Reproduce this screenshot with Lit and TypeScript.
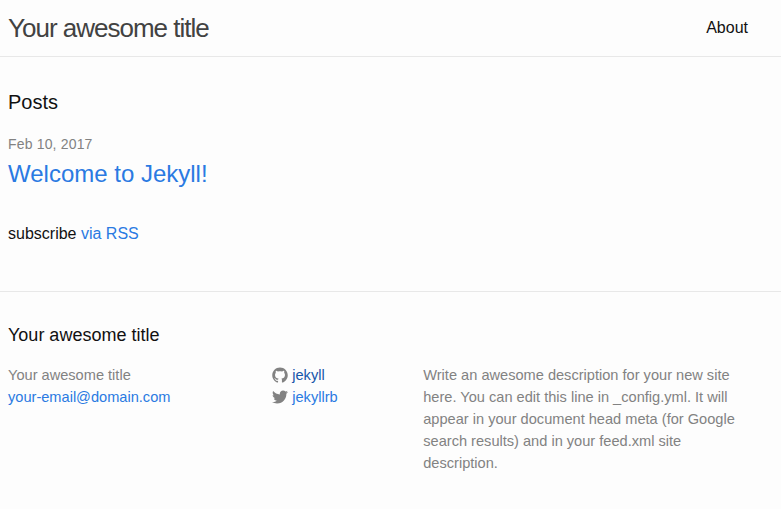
import { LitElement, html, css } from 'lit';
import { customElement } from 'lit/decorators.js';

const githubPath = 'M7.999,0.431c-4.285,0-7.76,3.474-7.76,7.761 c0,3.428,2.223,6.337,5.307,7.363c0.388,0.071,0.53-0.168,0.53-0.374c0-0.184-0.007-0.672-0.01-1.32 c-2.159,0.469-2.614-1.04-2.614-1.04c-0.353-0.896-0.862-1.135-0.862-1.135c-0.705-0.481,0.053-0.472,0.053-0.472 c0.779,0.055,1.189,0.8,1.189,0.8c0.692,1.186,1.816,0.843,2.258,0.645c0.071-0.502,0.271-0.843,0.493-1.037 C4.86,11.425,3.049,10.76,3.049,7.786c0-0.847,0.302-1.54,0.799-2.082C3.768,5.507,3.501,4.718,3.924,3.65 c0,0,0.652-0.209,2.134,0.796C6.677,4.273,7.34,4.187,8,4.184c0.659,0.003,1.323,0.089,1.943,0.261 c1.482-1.004,2.132-0.796,2.132-0.796c0.423,1.068,0.157,1.857,0.077,2.054c0.497,0.542,0.798,1.235,0.798,2.082 c0,2.981-1.814,3.637-3.543,3.829c0.279,0.24,0.527,0.713,0.527,1.437c0,1.037-0.01,1.874-0.01,2.129 c0,0.208,0.14,0.449,0.534,0.373c3.081-1.028,5.302-3.935,5.302-7.362C15.76,3.906,12.285,0.431,7.999,0.431z';
const twitterPath = 'M15.969,3.058c-0.586,0.26-1.217,0.436-1.878,0.515c0.675-0.405,1.194-1.045,1.438-1.809 c-0.632,0.375-1.332,0.647-2.076,0.793c-0.596-0.636-1.446-1.033-2.387-1.033c-1.806,0-3.27,1.464-3.27,3.27 c0,0.256,0.029,0.506,0.085,0.745C5.163,5.404,2.753,4.102,1.14,2.124C0.859,2.607,0.698,3.168,0.698,3.767 c0,1.134,0.577,2.135,1.455,2.722C1.616,6.472,1.112,6.325,0.671,6.08c0,0.014,0,0.027,0,0.041c0,1.584,1.127,2.906,2.623,3.206 C3.02,9.402,2.731,9.442,2.433,9.442c-0.211,0-0.416-0.021-0.615-0.059c0.416,1.299,1.624,2.245,3.055,2.271 c-1.119,0.877-2.529,1.4-4.061,1.4c-0.264,0-0.524-0.015-0.78-0.046c1.447,0.928,3.166,1.469,5.013,1.469 c6.015,0,9.304-4.983,9.304-9.304c0-0.142-0.003-0.283-0.009-0.423C14.976,4.29,15.531,3.714,15.969,3.058z';

@customElement('app-root')
export class AppRoot extends LitElement {
  static styles = css`
    :host {
      display: block;
      min-height: 100vh;
      background: #fdfdfd;
      color: #111;
      font: 400 16px/1.5 'Liberation Sans', Arial, sans-serif;
    }

    a {
      color: #2a7ae2;
      text-decoration: none;
    }

    h1, h2, p, ul {
      margin: 0;
      padding: 0;
      font-weight: 400;
    }

    ul {
      list-style: none;
    }

    .wrapper {
      width: 740px;
      padding-left: 8px;
    }

    .site-header {
      border-bottom: 1px solid #e8e8e8;
    }

    .site-header .wrapper {
      display: flex;
      justify-content: space-between;
      line-height: 56px;
    }

    .site-title {
      font-size: 26px;
      letter-spacing: -1px;
      color: #424242;
    }

    .page-link {
      color: #111;
    }

    .page-content {
      padding: 30px 0;
    }

    .page-heading {
      font-size: 20px;
      margin-bottom: 15px;
    }

    .post-list {
      margin-bottom: 30px;
    }

    .post-meta {
      font-size: 14px;
      letter-spacing: 0.17px;
      color: #828282;
    }

    .post-title {
      font-size: 16px;
    }

    .post-link {
      display: block;
      font-size: 24px;
    }

    .rss-subscribe {
      margin-bottom: 15px;
    }

    .site-footer {
      border-top: 1px solid #e8e8e8;
      padding: 30px 0;
    }

    .footer-heading {
      font-size: 18px;
      margin-bottom: 15px;
    }

    .footer-cols {
      display: grid;
      grid-template-columns: 35% 20% 45%;
      margin-left: -15px;
      font-size: 14.6px;
      line-height: 22px;
      color: #828282;
    }

    .footer-col {
      padding-left: 15px;
    }

    .social a {
      display: flex;
      align-items: center;
      gap: 4px;
    }

    .social a.visited {
      color: #1756a9;
    }

    .social svg {
      width: 16px;
      height: 16px;
      fill: #828282;
    }
  `;

  render() {
    return html`
      <header class="site-header">
        <div class="wrapper">
          <a class="site-title" href="#">Your awesome title</a>
          <a class="page-link" href="#">About</a>
        </div>
      </header>
      <main class="page-content">
        <div class="wrapper">
          <h1 class="page-heading">Posts</h1>
          <ul class="post-list">
            <li>
              <span class="post-meta">Feb 10, 2017</span>
              <h2 class="post-title"><a class="post-link" href="#">Welcome to Jekyll!</a></h2>
            </li>
          </ul>
          <p class="rss-subscribe">subscribe <a href="#">via RSS</a></p>
        </div>
      </main>
      <footer class="site-footer">
        <div class="wrapper">
          <h2 class="footer-heading">Your awesome title</h2>
          <div class="footer-cols">
            <div class="footer-col">
              <ul class="contact-list">
                <li>Your awesome title</li>
                <li><a href="#">your-email@domain.com</a></li>
              </ul>
            </div>
            <div class="footer-col">
              <ul class="social">
                <li>
                  <a class="visited" href="#">
                    <svg viewBox="0 0 16 16"><path d=${githubPath}></path></svg>
                    <span>jekyll</span>
                  </a>
                </li>
                <li>
                  <a href="#">
                    <svg viewBox="0 0 16 16"><path d=${twitterPath}></path></svg>
                    <span>jekyllrb</span>
                  </a>
                </li>
              </ul>
            </div>
            <div class="footer-col">
              <p>Write an awesome description for your new site here. You can edit this line in _config.yml. It will appear in your document head meta (for Google search results) and in your feed.xml site description.</p>
            </div>
          </div>
        </div>
      </footer>
    `;
  }
}
